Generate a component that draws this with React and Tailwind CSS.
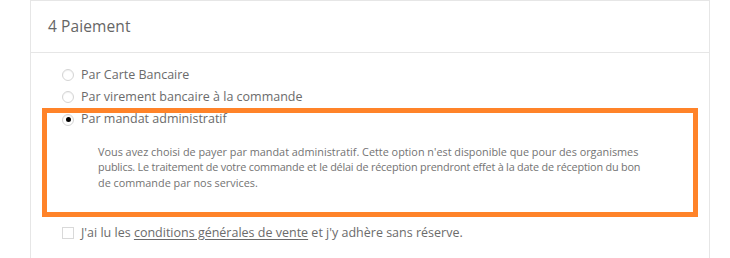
import React, { useState } from 'react';

const options = [
  { id: 'cb', label: 'Par Carte Bancaire' },
  { id: 'virement', label: 'Par virement bancaire à la commande' },
  { id: 'mandat', label: 'Par mandat administratif' },
];

const Radio = ({ checked }) => (
  <span className="flex h-[12px] w-[12px] shrink-0 items-center justify-center rounded-full border border-[#d4d4d4] bg-white shadow-[inset_0_1px_1px_rgba(0,0,0,0.06)]">
    {checked && <span className="h-[5px] w-[5px] rounded-full bg-black" />}
  </span>
);

const App = () => {
  const [method, setMethod] = useState('mandat');
  const [accepted, setAccepted] = useState(false);

  return (
    <div className="h-[258px] w-[730px] overflow-hidden bg-white font-['Open_Sans',sans-serif] text-[#6b6b6b]">
      <div className="ml-[30px] h-full w-[680px] border-x border-t border-[#e6e6e6]">
        <div className="flex h-[52px] items-center border-b border-[#e6e6e6] pl-[17px]">
          <h2 className="text-[15.5px] font-medium tracking-[0.1px] text-[#666]">4 Paiement</h2>
        </div>

        <div className="pl-[31px] pt-[11px]">
          {options.map((opt) => {
            const checked = method === opt.id;
            const row = (
              <button
                type="button"
                onClick={() => setMethod(opt.id)}
                className="flex h-[22.25px] items-center gap-[7px] text-left text-[12.5px]"
              >
                <Radio checked={checked} />
                <span>{opt.label}</span>
              </button>
            );
            if (opt.id !== 'mandat') return <div key={opt.id}>{row}</div>;
            return (
              <div key={opt.id} className="relative">
                {row}
                {checked && (
                  <p className="mt-[13px] pl-[36px] text-[10.85px] leading-[15.5px] text-[#737373]">
                    <span className="block">
                      Vous avez choisi de payer par mandat administratif. Cette option n'est disponible que pour des organismes
                    </span>
                    <span className="block tracking-[-0.2px]">
                      publics. Le traitement de votre commande et le délai de réception prendront effet à la date de réception du bon
                    </span>
                    <span className="block">de commande par nos services.</span>
                  </p>
                )}
                {/* highlight frame drawn over the selected option */}
                <div className="pointer-events-none absolute left-[-20px] top-[-1px] h-[109px] w-[656px] border-[5px] border-[#ff8329]" />
              </div>
            );
          })}

          <label className="mt-[32px] flex h-[22px] cursor-pointer items-center gap-[7px] text-[12.5px]">
            <span
              onClick={() => setAccepted(!accepted)}
              className="flex h-[12px] w-[12px] shrink-0 items-center justify-center border border-[#d9d9d9] bg-white text-[9px] leading-none text-black"
            >
              {accepted ? '✓' : ''}
            </span>
            <span>
              J'ai lu les <span className="underline underline-offset-2">conditions générales de vente</span> et j'y adhère sans réserve.
            </span>
          </label>
        </div>
      </div>
    </div>
  );
};

export default App;
